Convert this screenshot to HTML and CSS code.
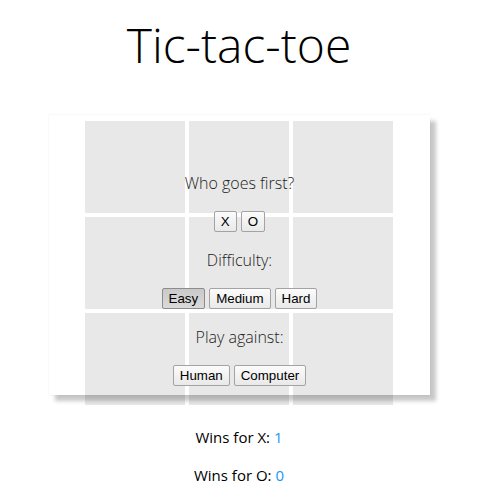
FILE: index.html
```html
<!DOCTYPE html>
<html>
<head>
<meta charset="utf-8">
<title>Tic-tac-toe</title>
<link rel="stylesheet" href="styles.css">
</head>
<body>
<div class="page">
  <h1 class="title">Tic-tac-toe</h1>
  <div class="game">
    <div class="board">
      <div class="cell"></div><div class="cell"></div><div class="cell"></div>
      <div class="cell"></div><div class="cell"></div><div class="cell"></div>
      <div class="cell"></div><div class="cell"></div><div class="cell"></div>
    </div>
    <div class="modal">
      <div class="label">Who goes first?</div>
      <div class="buttons">
        <button class="btn">X</button>
        <button class="btn">O</button>
      </div>
      <div class="label">Difficulty:</div>
      <div class="buttons">
        <button class="btn active">Easy</button>
        <button class="btn">Medium</button>
        <button class="btn">Hard</button>
      </div>
      <div class="label">Play against:</div>
      <div class="buttons">
        <button class="btn">Human</button>
        <button class="btn">Computer</button>
      </div>
    </div>
  </div>
  <p class="wins first">Wins for X: <span class="count">1</span></p>
  <p class="wins">Wins for O: <span class="count">0</span></p>
</div>
</body>
</html>
```

FILE: styles.css
```css
html, body {
  margin: 0;
  padding: 0;
  background: #ffffff;
}

body {
  font-family: "Open Sans", "Liberation Sans", sans-serif;
  color: #000;
}

.page {
  width: 478px;
  text-align: center;
}

.title {
  margin: 0;
  padding-top: 13px;
  height: 105px;
  box-sizing: border-box;
  font-size: 48px;
  font-weight: 300;
  line-height: 64px;
}

.game {
  position: relative;
  width: 308px;
  margin: 0 auto;
  margin-top: 16px;
}

.board {
  display: grid;
  grid-template-columns: repeat(3, 100px);
  grid-template-rows: repeat(3, 92px);
  gap: 4px;
}

.cell {
  background: #e8e8e8;
}

.modal {
  position: absolute;
  left: -36px;
  top: -6px;
  width: 381px;
  height: 280px;
  box-sizing: border-box;
  padding-top: 56px;
  box-shadow: 6px 6px 4px rgba(0, 0, 0, 0.22), 0 0 2px rgba(0, 0, 0, 0.08);
  display: flex;
  flex-direction: column;
  align-items: center;
}

.label {
  font-size: 16px;
  font-weight: 300;
  line-height: 24px;
  color: #222;
  margin-bottom: 16px;
}

.buttons {
  display: flex;
  gap: 4px;
  margin-bottom: 16px;
}

.btn {
  font-family: "Liberation Sans", Arial, sans-serif;
  font-size: 13.33px;
  height: 21px;
  line-height: 17px;
  padding: 1px 6px;
  border: 1px solid #a3a3a3;
  border-radius: 2px;
  background: linear-gradient(#fbfbfb, #e9e9e9);
  color: #000;
  box-sizing: border-box;
}

.btn.active {
  background: linear-gradient(#c9c9c9, #dadada);
  border-color: #8c8c8c;
}

.wins {
  margin: 0;
  font-size: 15px;
  line-height: 22px;
}

.wins.first {
  margin-top: 21px;
  margin-bottom: 16px;
}

.count {
  color: #2196f3;
}
```
